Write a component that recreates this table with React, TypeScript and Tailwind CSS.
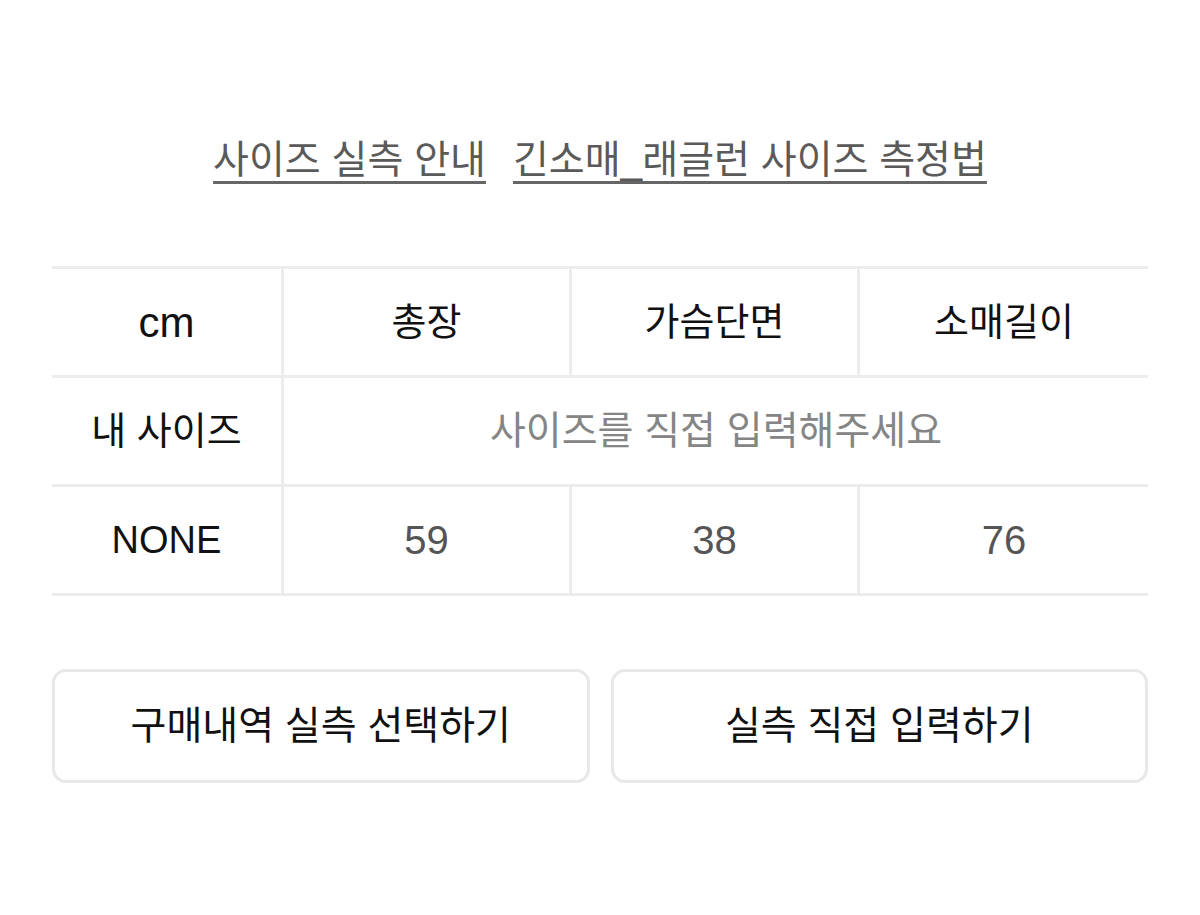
const FONT = "font-['Liberation_Sans','Noto_Sans_CJK_KR',sans-serif]";

const headers = ['총장', '가슴단면', '소매길이'];
const values = ['59', '38', '76'];

function Cell({ children, className = '' }: { children: React.ReactNode; className?: string }) {
  return (
    <div className={`flex items-center justify-center h-[109px] border-b-[3px] border-[#ececec] ${className}`}>
      {children}
    </div>
  );
}

export default function App() {
  return (
    <div className={`${FONT} w-[1200px] h-[915px] bg-white px-[52px]`}>
      {/* Links */}
      <div className="flex justify-center gap-[27px] pt-[136px] text-[39px] leading-[48px] text-[#5a5a5a]">
        <span className="underline decoration-[3px] underline-offset-[8px] decoration-[#666]">사이즈 실측 안내</span>
        <span className="underline decoration-[3px] underline-offset-[8px] decoration-[#666]">긴소매_래글런 사이즈 측정법</span>
      </div>

      {/* Size table */}
      <div className="mt-[82px] border-t-[3px] border-[#ececec] grid grid-cols-[232px_1fr_1fr_1fr]">
        <Cell className="border-r-[3px] text-[42px] text-[#111]">cm</Cell>
        {headers.map((h, i) => (
          <Cell key={h} className={`text-[38px] text-[#111] ${i < 2 ? 'border-r-[3px]' : ''}`}>
            {h}
          </Cell>
        ))}

        <Cell className="border-r-[3px] text-[38px] text-[#111]">내 사이즈</Cell>
        <Cell className="col-span-3 text-[39px] text-[#858585]">사이즈를 직접 입력해주세요</Cell>

        <Cell className="border-r-[3px] text-[38px] text-[#111]">NONE</Cell>
        {values.map((v, i) => (
          <Cell key={i} className={`text-[40px] text-[#555] ${i < 2 ? 'border-r-[3px]' : ''}`}>
            {v}
          </Cell>
        ))}
      </div>

      {/* Buttons */}
      <div className="mt-[73px] flex gap-[21px]">
        <button className="flex-1 h-[114px] rounded-[14px] border-[3px] border-[#e8e8e8] bg-white text-[39px] text-[#111]">
          구매내역 실측 선택하기
        </button>
        <button className="flex-1 h-[114px] rounded-[14px] border-[3px] border-[#e8e8e8] bg-white text-[39px] text-[#111]">
          실측 직접 입력하기
        </button>
      </div>
    </div>
  );
}
